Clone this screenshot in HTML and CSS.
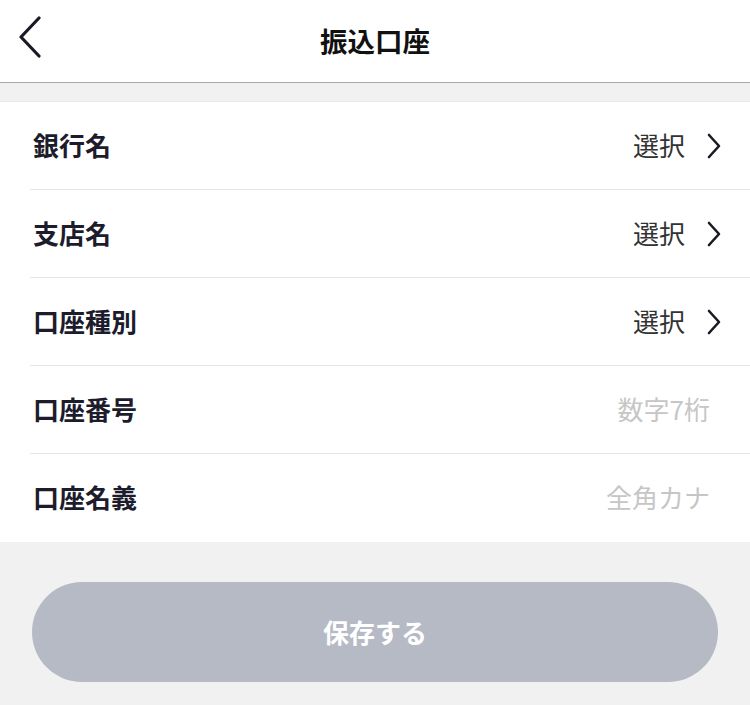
FILE: index.html
```html
<!DOCTYPE html>
<html lang="ja">
<head>
	<meta charset=utf-8>
	<meta name="viewport" content="width=device-width, initial-scale=1.0">
	<link rel="stylesheet" href="styles.css">
	<title>振込口座</title>
</head>
<body>
	<header class="nav">
		<a class="back" aria-label="戻る">
			<svg width="26" height="42" viewBox="0 0 26 42"><path d="M22 2 L4 21 L22 40" fill="none" stroke="#1a1a24" stroke-width="3.2" stroke-linecap="round" stroke-linejoin="round"/></svg>
		</a>
		<h1>振込口座</h1>
	</header>
	<div class="gap"></div>
	<ul class="form">
		<li class="row">
			<span class="label">銀行名</span>
			<a class="pick">選択
				<svg width="16" height="26" viewBox="0 0 16 26"><path d="M3 2 L13 13 L3 24" fill="none" stroke="#1a1a24" stroke-width="2.6" stroke-linecap="round" stroke-linejoin="round"/></svg>
			</a>
		</li>
		<li class="row">
			<span class="label">支店名</span>
			<a class="pick">選択
				<svg width="16" height="26" viewBox="0 0 16 26"><path d="M3 2 L13 13 L3 24" fill="none" stroke="#1a1a24" stroke-width="2.6" stroke-linecap="round" stroke-linejoin="round"/></svg>
			</a>
		</li>
		<li class="row">
			<span class="label">口座種別</span>
			<a class="pick">選択
				<svg width="16" height="26" viewBox="0 0 16 26"><path d="M3 2 L13 13 L3 24" fill="none" stroke="#1a1a24" stroke-width="2.6" stroke-linecap="round" stroke-linejoin="round"/></svg>
			</a>
		</li>
		<li class="row">
			<span class="label">口座番号</span>
			<input class="field" placeholder="数字7桁">
		</li>
		<li class="row">
			<span class="label">口座名義</span>
			<input class="field" placeholder="全角カナ">
		</li>
	</ul>
	<div class="actions">
		<button class="save" disabled>保存する</button>
	</div>
</body>
</html>
```

FILE: styles.css
```css
body {
	margin: 0;
	background: #f1f1f1;
	font-family: "Noto Sans CJK JP", "Noto Sans", sans-serif;
	color: #1a1a2a;
}
.nav {
	position: relative;
	height: 82px;
	background: #fff;
	border-bottom: 1px solid #a9a9a9;
	display: flex;
	align-items: center;
	justify-content: center;
}
.back {
	position: absolute;
	left: 17px;
	top: 16px;
}
.nav h1 {
	margin: 0 0 3px 0;
	font-size: 27.5px;
	font-weight: bold;
	color: #111;
}
.gap {
	height: 18px;
	border-bottom: 1px solid #e8e8e8;
}
.form {
	list-style: none;
	margin: 0;
	padding: 0 0 0 30px;
	background: #fff;
}
.row {
	height: 84px;
	display: flex;
	align-items: center;
	justify-content: space-between;
	padding: 0 30px 3px 3px;
	border-bottom: 1px solid #e6e6e6;
}
.row:last-child {
	border-bottom: none;
	height: 85px;
}
.label {
	font-size: 26px;
	font-weight: bold;
	color: #1c1c2c;
}
.pick {
	display: flex;
	align-items: center;
	gap: 21px;
	font-size: 26px;
	color: #333;
}
.pick svg {
	margin-right: -2px;
	margin-top: 3px;
}
.field {
	border: 0;
	outline: 0;
	background: transparent;
	text-align: right;
	width: 300px;
	margin-right: 8px;
	font-family: inherit;
	font-size: 26px;
	color: #333;
}
.field::placeholder {
	color: #c6c6c6;
}
.actions {
	padding: 40px 32px 0 32px;
}
.save {
	width: 100%;
	height: 100px;
	border: 0;
	border-radius: 50px;
	background: #b6bac5;
	color: #fff;
	font-family: inherit;
	font-size: 26px;
	font-weight: bold;
	padding-bottom: 3px;
}
```
